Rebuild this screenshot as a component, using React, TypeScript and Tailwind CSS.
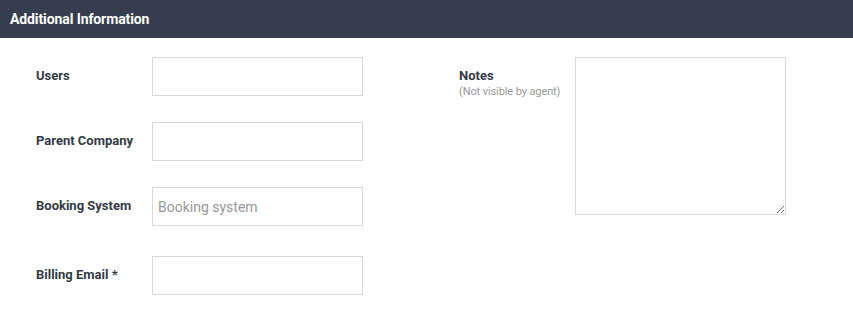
import React from "react";

const Row = ({ label, placeholder, mt }: { label: string; placeholder?: string; mt: string }) => (
  <div className={`flex items-center ${mt}`}>
    <label className="w-[116px] shrink-0 text-[13px] font-bold text-[#343a45] -translate-y-[1px]">{label}</label>
    <input
      placeholder={placeholder}
      className="w-[211px] h-[39px] border border-[#d9d9d9] bg-white px-[5px] text-[14px] text-[#333] placeholder:text-[#999] outline-none"
    />
  </div>
);

export default function App() {
  return (
    <div className="w-[853px] h-[317px] bg-white" style={{ fontFamily: "Roboto, 'Liberation Sans', sans-serif" }}>
      <div className="h-[38px] bg-[#353d4e] flex items-center pl-[10px]">
        <span className="text-white text-[14px] font-bold tracking-[-0.1px]">Additional Information</span>
      </div>
      <div className="flex pl-[36px] pt-[19px]">
        <div className="w-[423px] shrink-0">
          <Row label="Users" mt="mt-0" />
          <Row label="Parent Company" mt="mt-[26px]" />
          <Row label="Booking System" placeholder="Booking system" mt="mt-[26px]" />
          <Row label="Billing Email *" mt="mt-[30px]" />
        </div>
        <div className="flex items-start">
          <div className="w-[116px] shrink-0 pt-[11px]">
            <div className="text-[13px] font-bold text-[#343a45] leading-[16px]">Notes</div>
            <div className="text-[11px] text-[#999] leading-[14px] mt-[1px] tracking-[-0.1px]">(Not visible by agent)</div>
          </div>
          <textarea className="w-[211px] h-[158px] border border-[#d9d9d9] bg-white outline-none" />
        </div>
      </div>
    </div>
  );
}
